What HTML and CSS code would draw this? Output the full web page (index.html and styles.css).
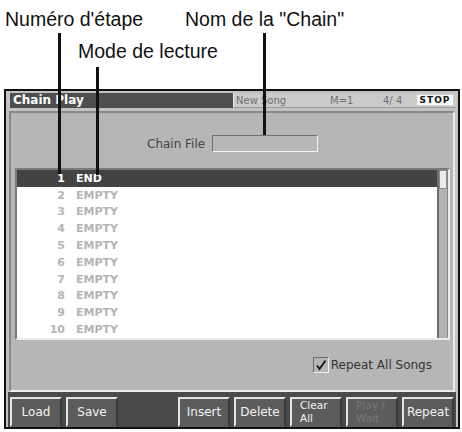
FILE: index.html
```html
<!DOCTYPE html>
<html>
<head>
<meta charset="utf-8">
<link rel="stylesheet" href="styles.css">
</head>
<body>
<div class="page">
  <div class="notes">
    <div class="note-row r1"><span class="n1">Numéro d'étape</span><span class="n3">Nom de la "Chain"</span></div>
    <div class="note-row r2"><span class="n2">Mode de lecture</span></div>
  </div>
  <div class="screen">
    <div class="titlebar">
      <div class="title">Chain Play</div>
      <div class="status">
        <span class="song">New Song</span>
        <span class="meas">M=1</span>
        <span class="beat">4/ 4</span>
        <span class="stop">STOP</span>
      </div>
    </div>
    <div class="panel">
      <div class="file-row"><span class="file-label">Chain File</span><span class="file-box"></span></div>
      <div class="list">
        <div class="rows">
          <div class="row sel"><span class="num">1</span><span class="mode">END</span></div>
          <div class="row"><span class="num">2</span><span class="mode">EMPTY</span></div>
          <div class="row"><span class="num">3</span><span class="mode">EMPTY</span></div>
          <div class="row"><span class="num">4</span><span class="mode">EMPTY</span></div>
          <div class="row"><span class="num">5</span><span class="mode">EMPTY</span></div>
          <div class="row"><span class="num">6</span><span class="mode">EMPTY</span></div>
          <div class="row"><span class="num">7</span><span class="mode">EMPTY</span></div>
          <div class="row"><span class="num">8</span><span class="mode">EMPTY</span></div>
          <div class="row"><span class="num">9</span><span class="mode">EMPTY</span></div>
          <div class="row"><span class="num">10</span><span class="mode">EMPTY</span></div>
        </div>
        <div class="scroll"><div class="thumb"></div></div>
      </div>
      <div class="repeat-row">
        <span class="check"><svg width="14" height="14" viewBox="0 0 14 14"><path d="M3 7.5 L5.5 11 L11.5 2.5" fill="none" stroke="#111" stroke-width="1.8"/></svg></span>
        <span class="repeat-label">Repeat All Songs</span>
      </div>
    </div>
    <div class="buttons">
      <div class="btn">Load</div>
      <div class="btn">Save</div>
      <div class="slot"></div>
      <div class="btn">Insert</div>
      <div class="btn">Delete</div>
      <div class="btn two"><span class="ln">Clear</span><span class="ln">All</span></div>
      <div class="btn two off"><span class="ln">Play /</span><span class="ln">Wait</span></div>
      <div class="btn">Repeat</div>
    </div>
  </div>
  <div class="leader l1"></div>
  <div class="leader l2"></div>
  <div class="leader l3"></div>
</div>
</body>
</html>
```

FILE: styles.css
```css
* { box-sizing: border-box; }
html, body { margin: 0; padding: 0; background: #fff; }
.page {
  position: relative;
  width: 462px;
  height: 432px;
  font-family: "DejaVu Sans", sans-serif;
}
.notes {
  height: 89px;
  padding-top: 9px;
  font-family: "Liberation Sans", Arial, sans-serif;
  font-size: 19.5px;
  line-height: 21px;
  color: #111;
}
.note-row { display: flex; white-space: nowrap; }
.r1 { padding-left: 5px; }
.n1 { width: 180px; }
.r2 { padding-left: 78px; margin-top: 11px; }

.screen {
  margin-left: 4px;
  width: 456px;
  height: 340px;
  border: 2px solid #111;
  background: #c2c2c2;
  padding: 2px 2px 0 2px;
  display: flex;
  flex-direction: column;
}
.titlebar {
  display: flex;
  height: 15px;
  margin-left: 2px;
}
.title {
  width: 223px;
  background: #4e4e4e;
  color: #fff;
  font-weight: bold;
  font-size: 12px;
  line-height: 15px;
  padding-left: 3px;
}
.status {
  flex: 1;
  display: flex;
  align-items: center;
  background: #cacaca;
  border-left: 1px solid #eee;
  border-bottom: 1px solid #9a9a9a;
  font-size: 10px;
  color: #707070;
  padding-left: 2px;
}
.song { width: 94px; }
.meas { width: 53px; }
.beat { width: 34px; }
.stop {
  width: 36px;
  height: 10px;
  background: #fafafa;
  color: #111;
  font-weight: bold;
  font-size: 9px;
  line-height: 10px;
  letter-spacing: 1px;
  text-align: center;
}

.panel {
  margin: 3px 1px 0 1px;
  height: 281px;
  background: #b6b6b6;
  border: 2px solid;
  border-color: #888 #ececec #ececec #888;
  padding: 0 3px 0 4px;
  display: flex;
  flex-direction: column;
}
.file-row {
  margin-top: 22px;
  display: flex;
  align-items: center;
  height: 17px;
  padding-left: 132px;
}
.file-label {
  font-size: 12px;
  color: #444;
  width: 65px;
}
.file-box {
  width: 106px;
  height: 17px;
  border: 1px solid;
  border-color: #707070 #f4f4f4 #f4f4f4 #707070;
  background: #b8b8b8;
}
.list {
  margin-top: 16px;
  height: 172px;
  border: 2px solid;
  border-color: #7a7a7a #ececec #ececec #7a7a7a;
  background: #fff;
  display: flex;
}
.rows { flex: 1; display: flex; flex-direction: column; }
.row {
  height: 16.8px;
  display: flex;
  align-items: center;
  font-weight: bold;
  font-size: 11px;
  color: #b4b4b4;
}
.row.sel { background: #434343; color: #fff; }
.num { width: 48px; text-align: right; }
.mode { margin-left: 11px; }
.scroll {
  width: 11px;
  background: #b2b2b2;
  border-left: 2px solid #6e6e6e;
  border-right: 1px solid #888;
}
.thumb {
  height: 19px;
  background: #ececec;
  border: 1px solid #8a8a8a;
}
.repeat-row {
  margin-top: 17px;
  display: flex;
  align-items: center;
  justify-content: flex-end;
  padding-right: 18px;
  height: 16px;
}
.check {
  width: 16px;
  height: 16px;
  border: 1px solid;
  border-color: #6a6a6a #f0f0f0 #f0f0f0 #6a6a6a;
  display: flex;
  align-items: center;
  justify-content: center;
}
.repeat-label {
  margin-left: 2px;
  font-size: 12px;
  color: #333;
}

.buttons {
  flex: 1;
  background: #4a4a4a;
  padding: 5px 0 0 2px;
  display: grid;
  grid-template-columns: repeat(8, 52px);
  column-gap: 4px;
}
.btn {
  background: #5c5c5c;
  border: 2px solid;
  border-color: #e2e2e2 #3a3a3a #5c5c5c #e2e2e2;
  color: #f2f2f2;
  font-size: 12px;
  display: flex;
  align-items: center;
  justify-content: center;
}
.btn.two {
  flex-direction: column;
  justify-content: flex-start;
  align-items: flex-start;
  padding: 0 0 0 8px;
  font-size: 10.5px;
  line-height: 13px;
}
.ln { display: block; height: 13px; }
.btn.off { color: #7a7a7a; }

.leader {
  position: absolute;
  width: 3px;
  background: #111;
}
.l1 { left: 58px; top: 33px; height: 141px; }
.l2 { left: 96px; top: 67px; height: 108px; }
.l3 { left: 263px; top: 33px; height: 102px; }
```
